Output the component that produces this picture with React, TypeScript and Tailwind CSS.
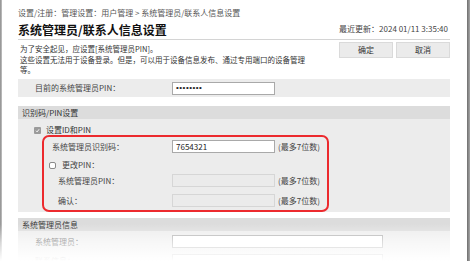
import React from 'react';

const font = { fontFamily: '"Noto Sans CJK SC", "Noto Sans", sans-serif' };

const Input = ({ value = '', disabled = false, wide = false, dots = false }: { value?: string; disabled?: boolean; wide?: boolean; dots?: boolean }) => (
  <div
    className={`h-[13px] ${wide ? 'w-[211px]' : 'w-[103px]'} border ${
      disabled ? 'bg-[#ebebeb] border-[#d6d6d6]' : 'bg-white border-[#a9a9a9]'
    } flex items-center pl-[3px] leading-none text-[#222] ${dots ? "text-[8px] font-['Liberation_Sans'] tracking-[0.5px]" : 'text-[8px]'}`}
  >
    {value}
  </div>
);

const Hint = () => <span className="ml-[3px] text-[8px] text-[#444]">(最多7位数)</span>;

const App = () => {
  return (
    <div className="relative w-[470px] h-[261px] overflow-hidden bg-white flex" style={font}>
      {/* left window edge */}
      <div className="w-[2px] h-full bg-gradient-to-r from-[#8c8c8c] to-[#c4c4c4]" />

      {/* page */}
      <div className="w-[465px] pl-[16px] pr-[17px] text-[#333]">
        {/* breadcrumb */}
        <div className="pt-[8px] h-[18px] text-[8px] leading-[10px] text-[#555] whitespace-nowrap">
          设置/注册：管理设置：用户管理 &gt; 系统管理员/联系人信息设置
        </div>

        {/* title */}
        <div className="mt-[4px] h-[18px] flex items-end justify-between border-b border-[#d4d4d4] pb-[2px]">
          <h1 className="text-[12px] font-bold leading-[14px] text-[#111] whitespace-nowrap">
            系统管理员/联系人信息设置
          </h1>
          <span className="text-[8px] leading-[10px] text-[#444] mb-[3px] pr-[2px]">最近更新：2024 01/11 3:35:40</span>
        </div>

        {/* description + buttons */}
        <div className="h-[39px] flex justify-between">
          <div className="pt-[4px] pl-[2px] text-[7.5px] leading-[10.5px] text-[#333] whitespace-nowrap">
            <div>为了安全起见，应设置[系统管理员PIN]。</div>
            <div>这些设置无法用于设备登录。但是，可以用于设备信息发布、通过专用端口的设备管理</div>
            <div>等。</div>
          </div>
          <div className="pt-[2px] flex gap-[3px]">
            <button className="w-[54px] h-[16px] bg-[#ebebeb] border border-[#dadada] text-[8px] text-[#333]">确定</button>
            <button className="w-[54px] h-[16px] bg-[#ebebeb] border border-[#dadada] text-[8px] text-[#333]">取消</button>
          </div>
        </div>

        {/* current PIN */}
        <div className="h-[18px] bg-[#ececec] flex items-center">
          <div className="w-[154px] pl-[17px] text-[8px] text-[#444]">目前的系统管理员PIN：</div>
          <Input value="••••••••" dots />
        </div>

        {/* ID / PIN section */}
        <div className="mt-[9px] h-[13px] bg-[#dcdcdc] pl-[4px] flex items-center text-[8px] text-[#333]">识别码/PIN设置</div>
        <div className="h-[93px] bg-[#ececec] pt-[6px]">
          <div className="h-[10px] flex items-center pl-[16px] text-[8px] text-[#333]">
            <span className="w-[7px] h-[7px] rounded-[1px] bg-[#9b9b9b] flex items-center justify-center">
              <svg width="5" height="5" viewBox="0 0 10 10">
                <path d="M2 5.5 L4.2 7.8 L8.2 2.5" fill="none" stroke="white" strokeWidth="1.8" />
              </svg>
            </span>
            <span className="ml-[5px]">设置ID和PIN</span>
          </div>

          <div className="ml-[24px] w-[287px] h-[77px] border-2 border-[#ec2a2e] rounded-[7px] text-[8px] text-[#444]">
            <div className="mt-[3px] h-[13px] flex items-center">
              <div className="w-[128px] pl-[8px]">系统管理员识别码：</div>
              <Input value="7654321" />
              <Hint />
            </div>
            <div className="mt-[6px] h-[12px] flex items-center pl-[5px]">
              <span className="w-[7px] h-[7px] rounded-[2px] bg-white border border-[#8a8a8a]" />
              <span className="ml-[6px]">更改PIN：</span>
            </div>
            <div className="mt-[3px] h-[13px] flex items-center">
              <div className="w-[128px] pl-[14px]">系统管理员PIN：</div>
              <Input disabled />
              <Hint />
            </div>
            <div className="mt-[7px] h-[13px] flex items-center">
              <div className="w-[128px] pl-[14px]">确认：</div>
              <Input disabled />
              <Hint />
            </div>
          </div>
        </div>

        {/* admin info section */}
        <div className="mt-[6px] h-[13px] bg-[#dcdcdc] pl-[4px] flex items-center text-[8px] text-[#333]">系统管理员信息</div>
        <div className="bg-[#ececec] pt-[4px] text-[8px] text-[#444]">
          <div className="h-[13px] flex items-center">
            <div className="w-[154px] pl-[17px]">系统管理员：</div>
            <Input wide />
          </div>
          <div className="mt-[6px] h-[13px] flex items-center">
            <div className="w-[154px] pl-[17px]">联系信息：</div>
            <Input wide />
          </div>
        </div>
      </div>

      {/* right window edge */}
      <div className="w-[3px] h-full bg-gradient-to-r from-[#6e6e6e] to-[#a8a8a8]" />

      {/* fade out at the bottom */}
      <div className="absolute left-0 right-[3px] top-[224px] h-[37px] bg-gradient-to-b from-white/0 via-white/60 to-white" />
    </div>
  );
};

export default App;
